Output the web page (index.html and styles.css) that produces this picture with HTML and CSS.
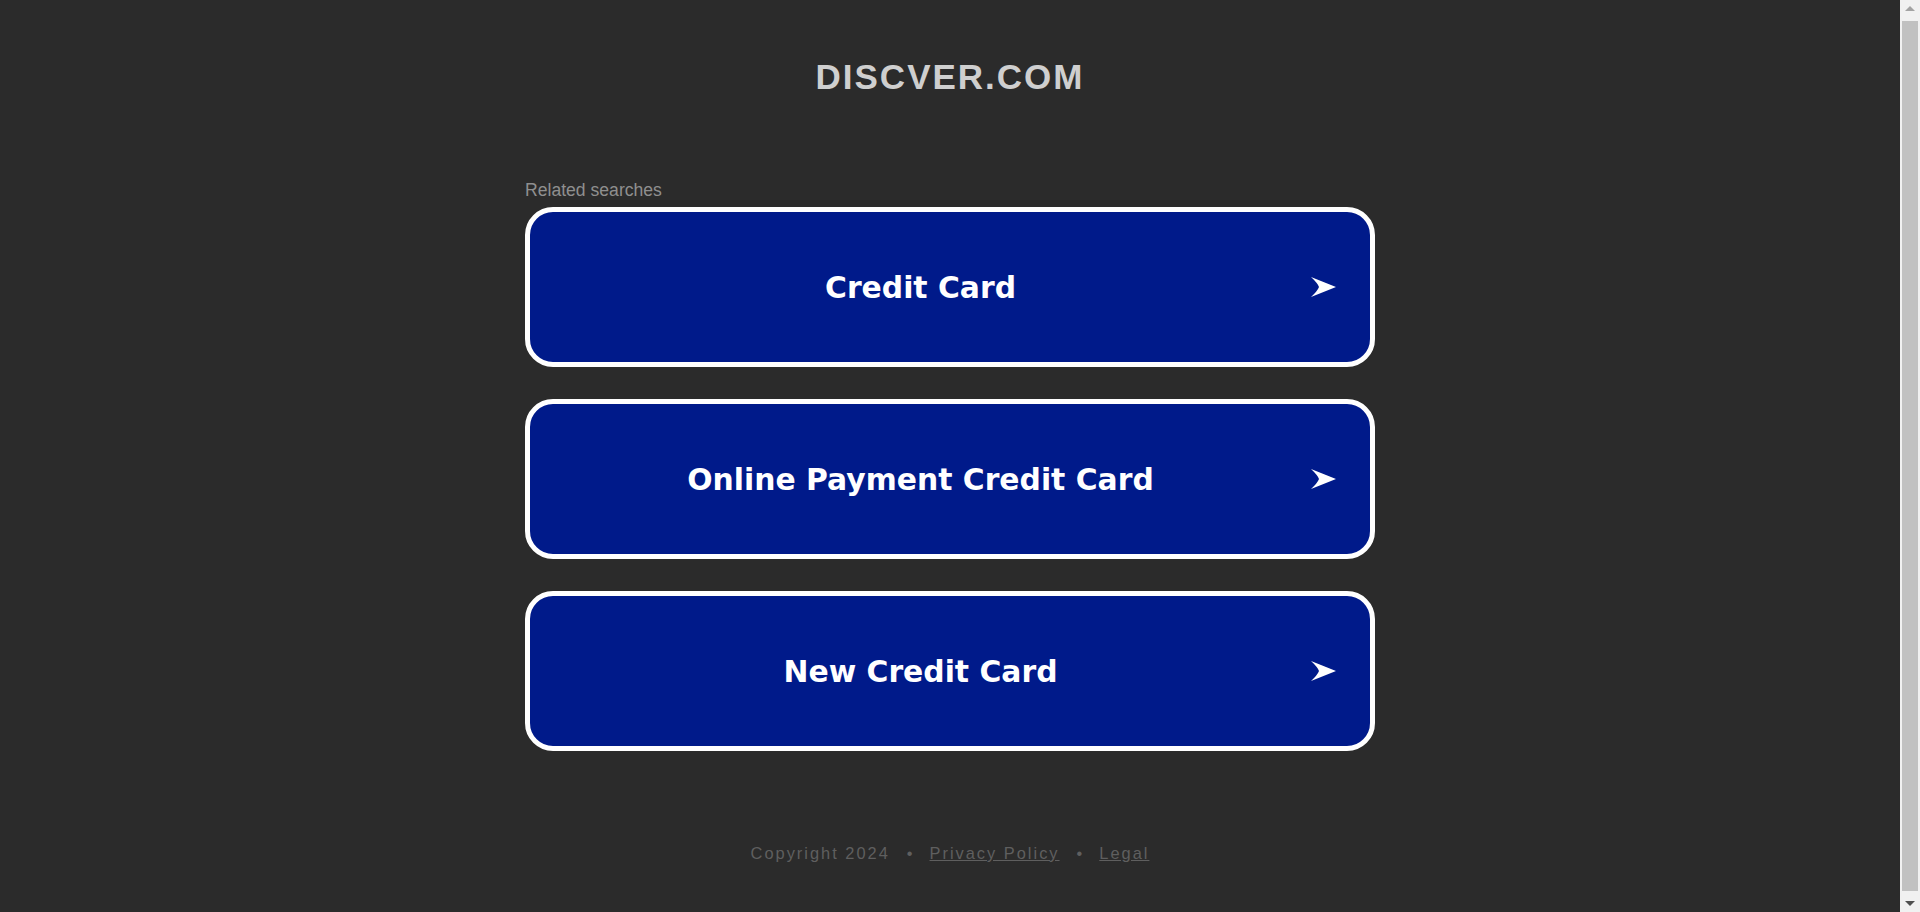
FILE: index.html
```html
<!DOCTYPE html>
<html lang="en">
<head>
<meta charset="utf-8">
<title>discver.com</title>
<link rel="stylesheet" href="styles.css">
</head>
<body>
<div class="viewport">
  <div class="page">
    <header class="header">
      <h1 class="domain">DISCVER.COM</h1>
    </header>
    <main class="content">
      <p class="label">Related searches</p>
      <ul class="links">
        <li><a class="link-box" href="#"><span class="link-text">Credit Card</span><svg class="arrow" width="25" height="20" viewBox="0 0 25 20"><path d="M0 0 L25 10 L0 20 Q6.5 14 8 10 Q6.5 6 0 0 Z" fill="#fff"/></svg></a></li>
        <li><a class="link-box" href="#"><span class="link-text">Online Payment Credit Card</span><svg class="arrow" width="25" height="20" viewBox="0 0 25 20"><path d="M0 0 L25 10 L0 20 Q6.5 14 8 10 Q6.5 6 0 0 Z" fill="#fff"/></svg></a></li>
        <li><a class="link-box" href="#"><span class="link-text">New Credit Card</span><svg class="arrow" width="25" height="20" viewBox="0 0 25 20"><path d="M0 0 L25 10 L0 20 Q6.5 14 8 10 Q6.5 6 0 0 Z" fill="#fff"/></svg></a></li>
      </ul>
    </main>
    <footer class="footer">
      <span>Copyright 2024</span><span class="sep">•</span><a href="#">Privacy Policy</a><span class="sep">•</span><a href="#">Legal</a>
    </footer>
  </div>
  <div class="scrollbar" aria-hidden="true">
    <div class="sb-btn"><svg width="10" height="6" viewBox="0 0 10 6"><path d="M5 0 L10 5 L0 5 Z" fill="#a3a3a3"/></svg></div>
    <div class="sb-track"><div class="sb-thumb"></div></div>
    <div class="sb-btn"><svg width="10" height="6" viewBox="0 0 10 6"><path d="M0 1 L10 1 L5 6 Z" fill="#505050"/></svg></div>
  </div>
</div>
</body>
</html>
```

FILE: styles.css
```css
html, body {
  margin: 0;
  padding: 0;
  background: #2b2b2b;
  height: 912px;
  overflow: hidden;
}
body {
  font-family: "Liberation Sans", Arial, sans-serif;
}
.viewport {
  display: flex;
  height: 912px;
}
.page {
  flex: 1;
  display: flex;
  flex-direction: column;
  align-items: center;
  padding: 57px 0 0;
}
.header {
  width: 850px;
  display: flex;
  justify-content: center;
}
.domain {
  margin: 0;
  font-size: 35px;
  line-height: 40px;
  font-weight: bold;
  letter-spacing: 2px;
  color: #cfcfcf;
}
.content {
  width: 850px;
  margin-top: 83px;
}
.label {
  margin: 0 0 7px;
  font-size: 17.6px;
  line-height: 20px;
  color: #8f8f8f;
}
.links {
  list-style: none;
  margin: 0;
  padding: 0;
  display: flex;
  flex-direction: column;
  gap: 32px;
}
.link-box {
  box-sizing: border-box;
  height: 160px;
  display: flex;
  align-items: center;
  background: #001a8a;
  border: 5px solid #ffffff;
  border-radius: 28px;
  padding: 0 34px 0 0;
  text-decoration: none;
}
.link-text {
  flex: 1;
  text-align: center;
  font-family: "DejaVu Sans", Verdana, sans-serif;
  font-weight: bold;
  font-size: 29.8px;
  color: #ffffff;
}
.arrow {
  flex: none;
  display: block;
}
.footer {
  margin-top: 92px;
  font-size: 16.4px;
  line-height: 20px;
  letter-spacing: 2px;
  color: #5f5f5f;
  display: flex;
  align-items: center;
}
.footer a {
  color: #5f5f5f;
  text-decoration: underline;
}
.sep {
  margin: 0 15px 0 17px;
}
.scrollbar {
  width: 20px;
  flex: none;
  background: #f1f1f1;
  display: flex;
  flex-direction: column;
}
.sb-btn {
  height: 18px;
  display: flex;
  align-items: center;
  justify-content: center;
}
.sb-track {
  flex: 1;
  padding: 3px 2px;
  display: flex;
}
.sb-thumb {
  flex: 1;
  background: #c1c1c1;
}
```
